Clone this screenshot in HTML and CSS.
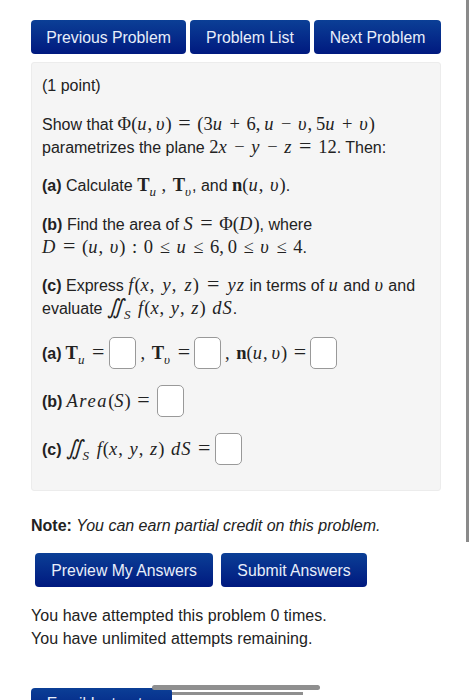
FILE: index.html
```html
<!DOCTYPE html>
<html lang="en">
<head>
<meta charset="utf-8">
<title>Problem</title>
<link rel="stylesheet" href="styles.css">
</head>
<body>
<div class="page">
  <nav class="nav">
    <a class="btn btn-prev">Previous Problem</a>
    <a class="btn btn-list">Problem List</a>
    <a class="btn btn-next">Next Problem</a>
  </nav>
  <section class="panel">
    <p class="point">(1 point)</p>
    <p class="para para-first">Show that <span class="m">Φ(<i>u</i>,&#8201;<i>υ</i>) <span class="eq">=</span> (3<i>u</i> + 6,&#8201;<i>u</i> − <i>υ</i>,&#8201;5<i>u</i> + <i>υ</i>)</span><br>parametrizes the plane <span class="m">2<i>x</i> − <i>y</i> − <i>z</i> <span class="eq">=</span> 12</span>. Then:</p>
    <p class="para"><b>(a)</b> Calculate <span class="m"><b>T</b><sub><i>u</i></sub></span> <span class="m">, <b>T</b><sub><i>υ</i></sub></span>, and <span class="m"><b>n</b>(<i>u</i>, <i>υ</i>)</span>.</p>
    <p class="para"><b>(b)</b> Find the area of <span class="m"><i>S</i> <span class="eq">=</span> Φ(<i>D</i>)</span>, where<br><span class="m"><i>D</i> <span class="eq">=</span> (<i>u</i>, <i>υ</i>) : 0 ≤ <i>u</i> ≤ 6,&#8201;0 ≤ <i>υ</i> ≤ 4</span>.</p>
    <p class="para"><b>(c)</b> Express <span class="m args"><i>f</i>(<i>x</i>, <i>y</i>, <i>z</i>) <span class="eq">=</span> <i>yz</i></span> in terms of <span class="m"><i>u</i></span> and <span class="m"><i>υ</i></span> and<br>evaluate <span class="m"><i class="int">∬</i><sub><i>S</i></sub> <i>f</i>(<i>x</i>, <i>y</i>, <i>z</i>) <i>dS</i></span>.</p>
    <div class="answer answer-a"><b>(a)</b> <span class="m lead"><b>T</b><sub><i>u</i></sub> <span class="eq">=</span></span><span class="box"></span><span class="m">, <b>T</b><sub><i>υ</i></sub> <span class="eq">=</span></span><span class="box"></span><span class="m">, <b>n</b>(<i>u</i>,&#8201;<i>υ</i>) <span class="eq">=</span></span><span class="box"></span></div>
    <div class="answer"><b>(b)</b> <span class="m wide"><i class="word">Area</i>(<i>S</i>) <span class="eq">=</span></span><span class="box"></span></div>
    <div class="answer"><b>(c)</b> <span class="m lead"><i class="int">∬</i><sub><i>S</i></sub> <i>f</i>(<i>x</i>, <i>y</i>, <i>z</i>) <i>dS</i> <span class="eq">=</span></span><span class="box"></span></div>
  </section>
  <p class="note"><b>Note:</b> <i>You can earn partial credit on this problem.</i></p>
  <div class="actions">
    <a class="btn btn-preview">Preview My Answers</a>
    <a class="btn btn-submit">Submit Answers</a>
  </div>
  <p class="attempts">You have attempted this problem 0 times.<br>You have unlimited attempts remaining.</p>
  <a class="btn btn-email">Email Instructor</a>
</div>
<div class="scroll-v"></div>
<div class="scroll-h1"></div>
<div class="scroll-h2"></div>
</body>
</html>
```
FILE: styles.css
```css
html, body {
  margin: 0;
  height: 700px;
  overflow: hidden;
  background: #fff;
}
body {
  font-family: "Liberation Sans", Arial, sans-serif;
  font-size: 16px;
  line-height: 23px;
  color: #222;
}
.page {
  padding: 20px 0 0 31px;
  width: 410px;
}
.nav {
  display: flex;
  gap: 4px;
}
.btn {
  display: block;
  height: 34px;
  line-height: 35px;
  font-size: 15.8px;
  text-align: center;
  color: #e8eefa;
  background: linear-gradient(#0b3f96, #00197f);
  border-radius: 4px;
  white-space: nowrap;
}
.btn-prev { width: 155px; }
.btn-list { width: 120px; }
.btn-next { width: 127px; }
.panel {
  box-sizing: border-box;
  margin-top: 8px;
  height: 429px;
  padding: 11px 10px;
  background: #f5f5f5;
  border: 1px solid #ececec;
  border-radius: 3px;
}
.panel p { margin: 0; }
.panel .para { margin-top: 15.4px; }
.panel .para-first { margin-top: 16px; }
.m {
  font-family: "Liberation Serif", "Times New Roman", serif;
  font-size: 18.5px;
  line-height: 0;
  word-spacing: 2px;
}
.m i { letter-spacing: 1px; }
.m sub {
  font-size: 13px;
  line-height: 0;
}
.m .int { font-size: 21px; letter-spacing: 0; }
.m .word { letter-spacing: 1.6px; }
.m .eq { font-size: 22px; line-height: 0; }
.args { word-spacing: 3.5px; }
.answer {
  display: flex;
  align-items: center;
  gap: 4px;
  height: 32px;
  margin-top: 16px;
}
.answer .m { line-height: 23px; }
.lead { margin-right: 1px; }
.wide { margin-right: 3px; }
.panel .answer-a { margin-top: 17px; }
.box {
  box-sizing: border-box;
  width: 27px;
  height: 32px;
  background: #fff;
  border: 1px solid #999;
  border-radius: 5px;
}
.note {
  margin: 23px 0 0;
}
.actions {
  display: flex;
  gap: 8px;
  margin: 16px 0 0 4px;
}
.btn-preview { width: 178px; }
.btn-submit { width: 146px; }
.attempts {
  margin: 17px 0 0;
  letter-spacing: .05px;
}
.btn-email {
  margin-top: 38px;
  width: 141px;
  line-height: 32px;
}
.scroll-v {
  position: absolute;
  left: 466px;
  top: 0;
  width: 3px;
  height: 542px;
  background: #8a8a8a;
}
.scroll-h1 {
  position: absolute;
  left: 152px;
  top: 685px;
  width: 168px;
  height: 5px;
  border-radius: 3px;
  background: #8f8f8f;
}
.scroll-h2 {
  position: absolute;
  left: 172px;
  top: 692px;
  width: 131px;
  height: 3px;
  background: #8f8f8f;
}
```
